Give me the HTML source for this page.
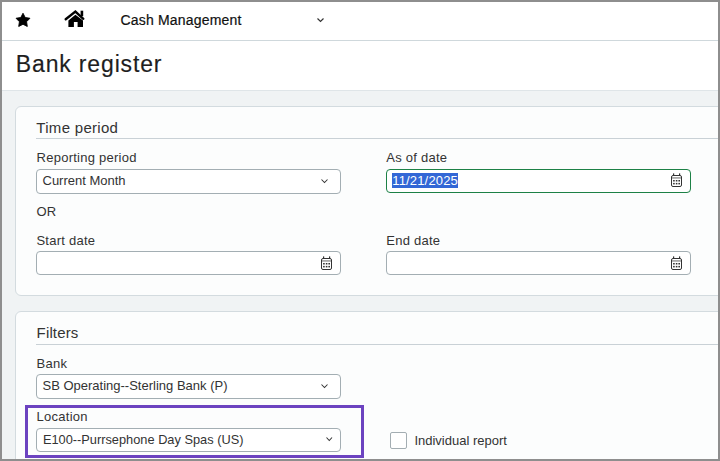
<!DOCTYPE html>
<html><head><meta charset="utf-8"><style>
html,body{margin:0;padding:0;width:720px;height:461px;overflow:hidden;background:#fff}
body{position:relative;font-family:"Liberation Sans", sans-serif}
.t{position:absolute;white-space:nowrap;font-family:"Liberation Sans", sans-serif}
.b{position:absolute;box-sizing:border-box}
.s{position:absolute;overflow:visible}
</style></head><body>
<div class="b" style="left:0px;top:0px;width:720px;height:41px;background:#fff;"></div>
<div class="b" style="left:0px;top:40px;width:720px;height:1px;background:#cfd8dc;"></div>
<div class="b" style="left:0px;top:41px;width:720px;height:49px;background:#fff;"></div>
<div class="b" style="left:0px;top:90px;width:720px;height:1px;background:#dfe5e8;"></div>
<div class="b" style="left:0px;top:91px;width:720px;height:370px;background:#f0f3f4;"></div>
<svg class="s" style="left:13.8px;top:11px" width="18" height="18" viewBox="0 0 18 18"><polygon points="9.00,2.24 11.20,6.51 15.94,7.28 12.57,10.70 13.29,15.45 9.00,13.29 4.71,15.45 5.43,10.70 2.06,7.28 6.80,6.51" fill="#000" stroke="#000" stroke-width="0.9" stroke-linejoin="round"/></svg>
<svg class="s" style="left:64px;top:9px" width="21" height="19" viewBox="64 9 21 19"><polyline points="65.7,19.2 75.4,11.6 83.3,18.8" fill="none" stroke="#000" stroke-width="2.4" stroke-linecap="round" stroke-linejoin="miter"/><rect x="80.6" y="10.7" width="2.6" height="5.5" fill="#000"/><polygon points="68.4,20.4 75.4,14.8 83,20.6 83,26.9 77.6,26.9 77.6,22 73.9,22 73.9,26.9 68.4,26.9" fill="#000"/></svg>
<div class="t" style="left:120.4px;top:12px;font-size:14px;line-height:17px;color:#111;letter-spacing:0.2px;font-weight:normal;-webkit-text-stroke:0.2px #111">Cash Management</div>
<svg class="s" style="left:315px;top:16px" width="11" height="8"><polyline points="2.5,2.5 5.5,5.5 8.5,2.5" fill="none" stroke="#333" stroke-width="1.2"/></svg>
<div class="t" style="left:15.8px;top:50px;font-size:23px;line-height:28px;color:#1e1e1e;letter-spacing:0.85px;font-weight:normal;-webkit-text-stroke:0.15px #1e1e1e">Bank register</div>
<div class="b" style="left:15px;top:106px;width:746px;height:190px;border:1px solid #d3dbdf;border-radius:6px;background:#fcfdfd;"></div>
<div class="t" style="left:36.3px;top:119px;font-size:15px;line-height:18px;color:#333;letter-spacing:0.3px;font-weight:normal;">Time period</div>
<div class="b" style="left:36px;top:138px;width:684px;height:1px;background:#c9d1d6;"></div>
<div class="t" style="left:36.6px;top:150px;font-size:13px;line-height:16px;color:#333;letter-spacing:0.25px;font-weight:normal;">Reporting period</div>
<div class="t" style="left:386.3px;top:150px;font-size:13px;line-height:16px;color:#333;letter-spacing:0.25px;font-weight:normal;">As of date</div>
<div class="b" style="left:36px;top:169px;width:305px;height:25px;border:1px solid #a3aeb3;border-radius:4px;background:#fff;"></div>
<div class="t" style="left:42.5px;top:173px;font-size:13px;line-height:16px;color:#333;letter-spacing:0px;font-weight:normal;">Current Month</div>
<svg class="s" style="left:319px;top:177px" width="11" height="8"><polyline points="2.5,2.5 5.5,5.5 8.5,2.5" fill="none" stroke="#333" stroke-width="1.05"/></svg>
<div class="b" style="left:386px;top:169px;width:305px;height:24px;border:1.5px solid #1d8146;border-radius:4px;background:#fff;"></div>
<div class="b" style="left:392px;top:173px;width:66px;height:15px;background:#3367d6;"></div>
<div class="t" style="left:392.3px;top:173px;font-size:13px;line-height:16px;color:#fff;letter-spacing:0.15px;font-weight:normal;">11/21/2025</div>
<svg class="s" style="left:671px;top:173px" width="12" height="14" viewBox="0 0 12 14"><rect x="0.5" y="2.5" width="10" height="11" rx="1.5" fill="#fff" stroke="#333" stroke-width="1"/><rect x="1" y="4" width="9" height="1.8" fill="#aaaaaa"/><rect x="2" y="0.4" width="1.2" height="2.2" fill="#333"/><rect x="8" y="0.4" width="1.2" height="2.2" fill="#333"/><rect x="2.1" y="7.0" width="1.6" height="1.5" fill="#333"/><rect x="2.1" y="9.9" width="1.6" height="1.5" fill="#333"/><rect x="4.8" y="7.0" width="1.6" height="1.5" fill="#333"/><rect x="4.8" y="9.9" width="1.6" height="1.5" fill="#333"/><rect x="7.4" y="7.0" width="1.6" height="1.5" fill="#333"/><rect x="7.4" y="9.9" width="1.6" height="1.5" fill="#333"/></svg>
<div class="t" style="left:36.4px;top:204px;font-size:13px;line-height:16px;color:#333;letter-spacing:0.25px;font-weight:normal;">OR</div>
<div class="t" style="left:36.4px;top:233px;font-size:13px;line-height:16px;color:#333;letter-spacing:0.25px;font-weight:normal;">Start date</div>
<div class="t" style="left:386.3px;top:233px;font-size:13px;line-height:16px;color:#333;letter-spacing:0.25px;font-weight:normal;">End date</div>
<div class="b" style="left:36px;top:251px;width:305px;height:24px;border:1px solid #a3aeb3;border-radius:4px;background:#fff;"></div>
<svg class="s" style="left:321px;top:256px" width="12" height="14" viewBox="0 0 12 14"><rect x="0.5" y="2.5" width="10" height="11" rx="1.5" fill="#fff" stroke="#333" stroke-width="1"/><rect x="1" y="4" width="9" height="1.8" fill="#aaaaaa"/><rect x="2" y="0.4" width="1.2" height="2.2" fill="#333"/><rect x="8" y="0.4" width="1.2" height="2.2" fill="#333"/><rect x="2.1" y="7.0" width="1.6" height="1.5" fill="#333"/><rect x="2.1" y="9.9" width="1.6" height="1.5" fill="#333"/><rect x="4.8" y="7.0" width="1.6" height="1.5" fill="#333"/><rect x="4.8" y="9.9" width="1.6" height="1.5" fill="#333"/><rect x="7.4" y="7.0" width="1.6" height="1.5" fill="#333"/><rect x="7.4" y="9.9" width="1.6" height="1.5" fill="#333"/></svg>
<div class="b" style="left:386px;top:251px;width:305px;height:24px;border:1px solid #a3aeb3;border-radius:4px;background:#fff;"></div>
<svg class="s" style="left:671px;top:256px" width="12" height="14" viewBox="0 0 12 14"><rect x="0.5" y="2.5" width="10" height="11" rx="1.5" fill="#fff" stroke="#333" stroke-width="1"/><rect x="1" y="4" width="9" height="1.8" fill="#aaaaaa"/><rect x="2" y="0.4" width="1.2" height="2.2" fill="#333"/><rect x="8" y="0.4" width="1.2" height="2.2" fill="#333"/><rect x="2.1" y="7.0" width="1.6" height="1.5" fill="#333"/><rect x="2.1" y="9.9" width="1.6" height="1.5" fill="#333"/><rect x="4.8" y="7.0" width="1.6" height="1.5" fill="#333"/><rect x="4.8" y="9.9" width="1.6" height="1.5" fill="#333"/><rect x="7.4" y="7.0" width="1.6" height="1.5" fill="#333"/><rect x="7.4" y="9.9" width="1.6" height="1.5" fill="#333"/></svg>
<div class="b" style="left:15px;top:311px;width:746px;height:210px;border:1px solid #d3dbdf;border-radius:6px;background:#fcfdfd;"></div>
<div class="t" style="left:36.6px;top:324px;font-size:15px;line-height:18px;color:#333;letter-spacing:0.15px;font-weight:normal;">Filters</div>
<div class="b" style="left:36px;top:344px;width:684px;height:1px;background:#c9d1d6;"></div>
<div class="t" style="left:36.6px;top:356px;font-size:13px;line-height:16px;color:#333;letter-spacing:0.25px;font-weight:normal;">Bank</div>
<div class="b" style="left:36px;top:374px;width:305px;height:25px;border:1px solid #a3aeb3;border-radius:4px;background:#fff;"></div>
<div class="t" style="left:42.5px;top:378px;font-size:13px;line-height:16px;color:#333;letter-spacing:0px;font-weight:normal;">SB Operating--Sterling Bank (P)</div>
<svg class="s" style="left:319px;top:382px" width="11" height="8"><polyline points="2.5,2.5 5.5,5.5 8.5,2.5" fill="none" stroke="#333" stroke-width="1.05"/></svg>
<div class="b" style="left:25px;top:405px;width:339px;height:53px;border:3px solid #6c43c0;border-radius:0px;background:transparent;"></div>
<div class="t" style="left:36.6px;top:409px;font-size:13px;line-height:16px;color:#333;letter-spacing:0.25px;font-weight:normal;">Location</div>
<div class="b" style="left:36px;top:428px;width:305px;height:24px;border:1px solid #a3aeb3;border-radius:4px;background:#fff;"></div>
<div class="t" style="left:42.9px;top:432px;font-size:12.8px;line-height:15px;color:#333;letter-spacing:0px;font-weight:normal;">E100--Purrsephone Day Spas (US)</div>
<svg class="s" style="left:323.5px;top:435px" width="10.5" height="8"><polyline points="2.5,2.5 5.25,5.5 8.0,2.5" fill="none" stroke="#333" stroke-width="1.05"/></svg>
<div class="b" style="left:390px;top:432px;width:17px;height:17px;border:1px solid #a3adb2;border-radius:2px;background:#fff;"></div>
<div class="t" style="left:414.4px;top:433px;font-size:13px;line-height:16px;color:#333;letter-spacing:0px;font-weight:normal;">Individual report</div>
<div class="b" style="left:0px;top:0px;width:720px;height:2px;background:#8e8e8e;z-index:10"></div>
<div class="b" style="left:0px;top:459px;width:720px;height:2px;background:#8e8e8e;z-index:10"></div>
<div class="b" style="left:0px;top:0px;width:2px;height:461px;background:#8e8e8e;z-index:10"></div>
<div class="b" style="left:718px;top:0px;width:2px;height:461px;background:#8e8e8e;z-index:10"></div>
</body></html>
